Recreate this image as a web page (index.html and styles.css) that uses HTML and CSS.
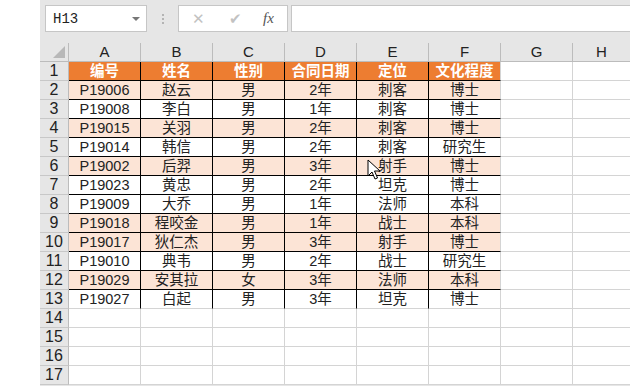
FILE: index.html
```html
<!DOCTYPE html>
<html lang="zh-CN">
<head>
    <meta charset="UTF-8">
    <title>Excel</title>
    <link rel="stylesheet" href="styles.css">
</head>
<body>
    <div class="app">
        <div class="bar">
            <div class="namebox">
                <span>H13</span>
                <span class="drop"></span>
            </div>
            <div class="dots"><i></i><i></i><i></i></div>
            <div class="fxbox">
                <span class="x">&#x2715;</span>
                <span class="ok">&#x2714;</span>
                <span class="fx">fx</span>
            </div>
            <div class="input"></div>
        </div>

        <div class="sheet">
            <div class="row head">
                <div class="corner"></div>
                <div class="col">A</div><div class="col">B</div><div class="col">C</div><div class="col">D</div>
                <div class="col">E</div><div class="col">F</div><div class="col">G</div><div class="col">H</div>
            </div>
            <div class="row">
                <div class="rn">1</div>
                <div class="c h b r">编号</div><div class="c h b r">姓名</div><div class="c h b r">性别</div>
                <div class="c h b r">合同日期</div><div class="c h b r">定位</div><div class="c h b">文化程度</div>
                <div class="c"></div><div class="c"></div>
            </div>
            <div class="row">
                <div class="rn">2</div>
                <div class="c f b r">P19006</div><div class="c f b r">赵云</div><div class="c f b r">男</div>
                <div class="c f b r">2年</div><div class="c f b r">刺客</div><div class="c f b">博士</div>
                <div class="c"></div><div class="c"></div>
            </div>
            <div class="row">
                <div class="rn">3</div>
                <div class="c b r">P19008</div><div class="c b r">李白</div><div class="c b r">男</div>
                <div class="c b r">1年</div><div class="c b r">刺客</div><div class="c b">博士</div>
                <div class="c"></div><div class="c"></div>
            </div>
            <div class="row">
                <div class="rn">4</div>
                <div class="c f b r">P19015</div><div class="c f b r">关羽</div><div class="c f b r">男</div>
                <div class="c f b r">2年</div><div class="c f b r">刺客</div><div class="c f b">博士</div>
                <div class="c"></div><div class="c"></div>
            </div>
            <div class="row">
                <div class="rn">5</div>
                <div class="c b r">P19014</div><div class="c b r">韩信</div><div class="c b r">男</div>
                <div class="c b r">2年</div><div class="c b r">刺客</div><div class="c b">研究生</div>
                <div class="c"></div><div class="c"></div>
            </div>
            <div class="row">
                <div class="rn">6</div>
                <div class="c f b r">P19002</div><div class="c f b r">后羿</div><div class="c f b r">男</div>
                <div class="c f b r">3年</div><div class="c f b r">射手</div><div class="c f b">博士</div>
                <div class="c"></div><div class="c"></div>
            </div>
            <div class="row">
                <div class="rn">7</div>
                <div class="c b r">P19023</div><div class="c b r">黄忠</div><div class="c b r">男</div>
                <div class="c b r">2年</div><div class="c b r">坦克</div><div class="c b">博士</div>
                <div class="c"></div><div class="c"></div>
            </div>
            <div class="row">
                <div class="rn">8</div>
                <div class="c b r">P19009</div><div class="c b r">大乔</div><div class="c b r">男</div>
                <div class="c b r">1年</div><div class="c b r">法师</div><div class="c b">本科</div>
                <div class="c"></div><div class="c"></div>
            </div>
            <div class="row">
                <div class="rn">9</div>
                <div class="c f b r">P19018</div><div class="c f b r">程咬金</div><div class="c f b r">男</div>
                <div class="c f b r">1年</div><div class="c f b r">战士</div><div class="c f b">本科</div>
                <div class="c"></div><div class="c"></div>
            </div>
            <div class="row">
                <div class="rn">10</div>
                <div class="c f b r">P19017</div><div class="c f b r">狄仁杰</div><div class="c f b r">男</div>
                <div class="c f b r">3年</div><div class="c f b r">射手</div><div class="c f b">博士</div>
                <div class="c"></div><div class="c"></div>
            </div>
            <div class="row">
                <div class="rn">11</div>
                <div class="c b r">P19010</div><div class="c b r">典韦</div><div class="c b r">男</div>
                <div class="c b r">2年</div><div class="c b r">战士</div><div class="c b">研究生</div>
                <div class="c"></div><div class="c"></div>
            </div>
            <div class="row">
                <div class="rn">12</div>
                <div class="c f b r">P19029</div><div class="c f b r">安其拉</div><div class="c f b r">女</div>
                <div class="c f b r">3年</div><div class="c f b r">法师</div><div class="c f b">本科</div>
                <div class="c"></div><div class="c"></div>
            </div>
            <div class="row">
                <div class="rn">13</div>
                <div class="c r">P19027</div><div class="c r">白起</div><div class="c r">男</div>
                <div class="c r">3年</div><div class="c r">坦克</div><div class="c">博士</div>
                <div class="c"></div><div class="c"></div>
            </div>
            <div class="row">
                <div class="rn">14</div>
                <div class="c"></div><div class="c"></div><div class="c"></div><div class="c"></div>
                <div class="c"></div><div class="c"></div><div class="c"></div><div class="c"></div>
            </div>
            <div class="row">
                <div class="rn">15</div>
                <div class="c"></div><div class="c"></div><div class="c"></div><div class="c"></div>
                <div class="c"></div><div class="c"></div><div class="c"></div><div class="c"></div>
            </div>
            <div class="row">
                <div class="rn">16</div>
                <div class="c"></div><div class="c"></div><div class="c"></div><div class="c"></div>
                <div class="c"></div><div class="c"></div><div class="c"></div><div class="c"></div>
            </div>
            <div class="row">
                <div class="rn">17</div>
                <div class="c"></div><div class="c"></div><div class="c"></div><div class="c"></div>
                <div class="c"></div><div class="c"></div><div class="c"></div><div class="c"></div>
            </div>

            <!-- mouse pointer over E6 -->
            <svg class="pointer" width="14" height="22" viewBox="0 0 14 22">
                <path d="M1 1 L1 17 L5 13 L8 20 L10.5 19 L7.5 12 L13 12 Z" fill="#fff" stroke="#000" stroke-width="1" stroke-linejoin="round"/>
            </svg>
        </div>
    </div>
</body>
</html>
```

FILE: styles.css
```css
body {
    margin: 0;
    background-color: #fff;
    font-family: "Liberation Sans", "Noto Sans CJK SC", sans-serif;
    overflow: hidden;
}

.app {
    margin-left: 40px;
    width: 590px;
    height: 386px;
    background-color: #e6e6e6;
}

.bar {
    height: 43px;
    display: flex;
    align-items: flex-start;
    padding-top: 5px;
    box-sizing: border-box;
}

.namebox {
    margin-left: 5px;
    width: 102px;
    height: 27px;
    box-sizing: border-box;
    background-color: #fff;
    border: 1px solid #c6c6c6;
    display: flex;
    align-items: center;
    justify-content: space-between;
    padding: 0 6px 0 7px;
    font-family: "Liberation Mono", monospace;
    font-size: 14px;
    color: #222;
}

.drop {
    width: 0;
    height: 0;
    border-left: 4px solid transparent;
    border-right: 4px solid transparent;
    border-top: 4px solid #777;
}

.dots {
    width: 31px;
    height: 27px;
    display: flex;
    flex-direction: column;
    align-items: center;
    justify-content: center;
    gap: 2px;
}

.dots i {
    width: 2px;
    height: 2px;
    background-color: #b4b4b4;
}

.fxbox {
    width: 110px;
    height: 27px;
    box-sizing: border-box;
    background-color: #fff;
    border: 1px solid #c6c6c6;
    display: flex;
    align-items: center;
    position: relative;
}

.fxbox .x {
    position: absolute;
    left: 13px;
    font-size: 15px;
    color: #c2c2c2;
}

.fxbox .ok {
    position: absolute;
    left: 50px;
    font-size: 15px;
    color: #c2c2c2;
}

.fxbox .fx {
    position: absolute;
    left: 84px;
    font-family: "Liberation Serif", serif;
    font-style: italic;
    font-size: 15px;
    color: #555;
}

.input {
    margin-left: 3px;
    flex: 1;
    height: 27px;
    box-sizing: border-box;
    background-color: #fff;
    border: 1px solid #c6c6c6;
    border-right: none;
}

.sheet {
    position: relative;
    background-color: #fff;
}

.row {
    display: grid;
    grid-template-columns: 29px repeat(7, 72px) 58px;
    height: 19px;
}

.row > div {
    box-sizing: border-box;
    height: 19px;
    line-height: 18px;
    text-align: center;
    white-space: nowrap;
}

.head > div {
    background-color: #e6e6e6;
    border-right: 1px solid #bcbcbc;
    border-bottom: 1px solid #bcbcbc;
    font-size: 15px;
    color: #222;
}

.corner {
    position: relative;
}

.corner::after {
    content: "";
    position: absolute;
    right: 3px;
    bottom: 3px;
    width: 0;
    height: 0;
    border-left: 12px solid transparent;
    border-bottom: 12px solid #b8b8b8;
}

.rn {
    background-color: #e6e6e6;
    border-right: 1px solid #bcbcbc;
    border-bottom: 1px solid #c8c8c8;
    font-size: 16px;
    color: #222;
}

.c {
    border-right: 1px solid #d4d4d4;
    border-bottom: 1px solid #d4d4d4;
    font-size: 14.5px;
    color: #222;
}

.c.h {
    background-color: #ed7d31;
    color: #fff;
    font-weight: bold;
}

.c.f {
    background-color: #fce4d6;
}

.c.b {
    border-bottom-color: #000;
}

.c.r {
    border-right-color: #000;
}

.pointer {
    position: absolute;
    left: 327px;
    top: 116px;
}
```
